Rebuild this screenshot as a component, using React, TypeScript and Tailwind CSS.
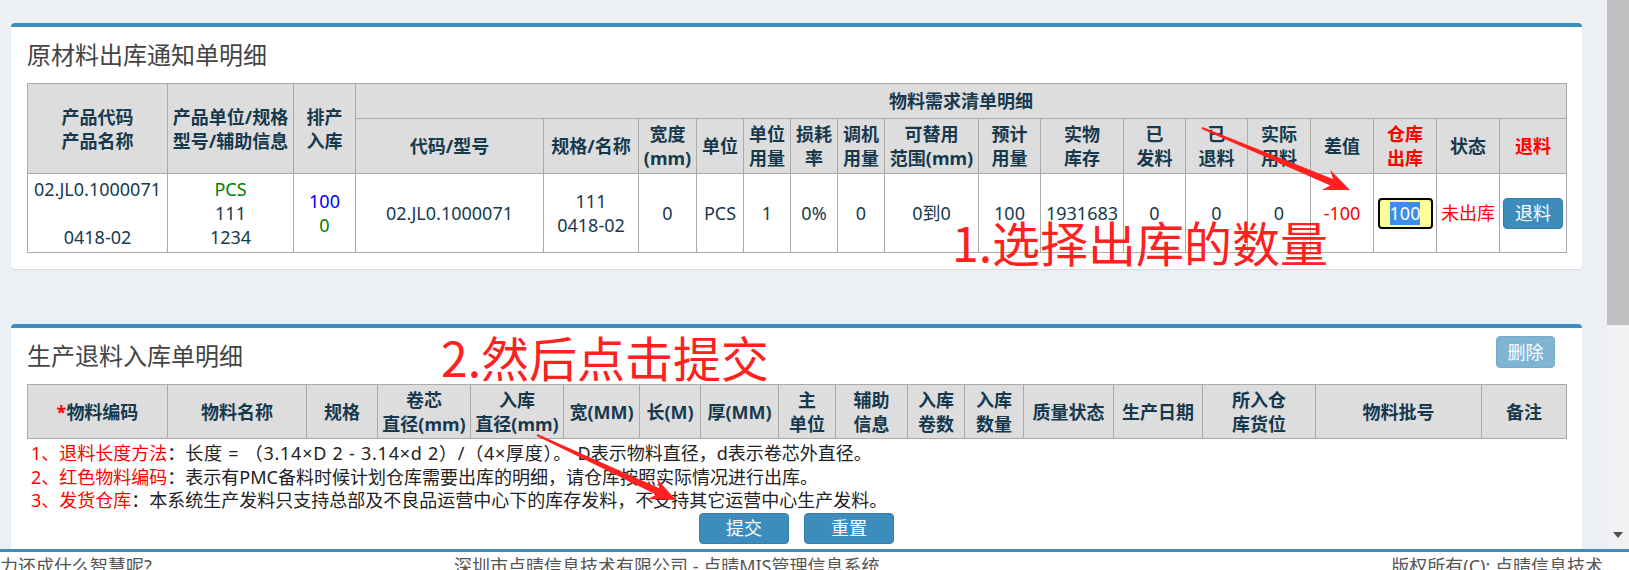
import type { ReactNode } from "react";

// column widths of the two detail tables (px, sum = 1539)
const issueCols = [
  "w-[140px]", "w-[126px]", "w-[62px]", "w-[188px]", "w-[95px]", "w-[58px]", "w-[47px]",
  "w-[47px]", "w-[47px]", "w-[47px]", "w-[94px]", "w-[62px]", "w-[83px]", "w-[62px]",
  "w-[62px]", "w-[63px]", "w-[63px]", "w-[63px]", "w-[63px]", "w-[67px]",
];

const returnCols = [
  "w-[140px]", "w-[139px]", "w-[71px]", "w-[93px]", "w-[93px]", "w-[76px]", "w-[61px]",
  "w-[78px]", "w-[57px]", "w-[72px]", "w-[57px]", "w-[59px]", "w-[90px]", "w-[89px]",
  "w-[113px]", "w-[166px]", "w-[85px]",
];

type Head = { lines: string[]; red?: boolean };

const bomHeads: Head[] = [
  { lines: ["代码/型号"] },
  { lines: ["规格/名称"] },
  { lines: ["宽度", "(mm)"] },
  { lines: ["单位"] },
  { lines: ["单位", "用量"] },
  { lines: ["损耗", "率"] },
  { lines: ["调机", "用量"] },
  { lines: ["可替用", "范围(mm)"] },
  { lines: ["预计", "用量"] },
  { lines: ["实物", "库存"] },
  { lines: ["已", "发料"] },
  { lines: ["已", "退料"] },
  { lines: ["实际", "用料"] },
  { lines: ["差值"] },
  { lines: ["仓库", "出库"], red: true },
  { lines: ["状态"] },
  { lines: ["退料"], red: true },
];

const returnHeads: Head[] = [
  { lines: ["物料名称"] },
  { lines: ["规格"] },
  { lines: ["卷芯", "直径(mm)"] },
  { lines: ["入库", "直径(mm)"] },
  { lines: ["宽(MM)"] },
  { lines: ["长(M)"] },
  { lines: ["厚(MM)"] },
  { lines: ["主", "单位"] },
  { lines: ["辅助", "信息"] },
  { lines: ["入库", "卷数"] },
  { lines: ["入库", "数量"] },
  { lines: ["质量状态"] },
  { lines: ["生产日期"] },
  { lines: ["所入仓", "库货位"] },
  { lines: ["物料批号"] },
  { lines: ["备注"] },
];

function Th({ children, className = "", ...rest }: { children: ReactNode; className?: string; rowSpan?: number; colSpan?: number }) {
  return (
    <th {...rest} className={`border border-[#aaa] bg-[#ddd] p-0 text-center font-bold leading-[24px] ${className}`}>
      {children}
    </th>
  );
}

function Td({ children, className = "" }: { children: ReactNode; className?: string }) {
  return <td className={`border border-[#aaa] p-0 text-center leading-[24px] ${className}`}>{children}</td>;
}

function HeadCell({ head }: { head: Head }) {
  return (
    <Th className={head.red ? "text-[#ff0000]" : ""}>
      {head.lines.map((l) => (
        <div key={l}>{l}</div>
      ))}
    </Th>
  );
}

function Box({ children, className = "" }: { children: ReactNode; className?: string }) {
  return (
    <section className={`w-[1571px] rounded-[4px] border-t-[4px] border-[#3c8dbc] bg-white shadow-[0_1px_1px_rgba(0,0,0,0.1)] ${className}`}>
      {children}
    </section>
  );
}

function IssuePanel() {
  return (
    <Box>
      <div className="flex h-[56px] items-center px-[16px]">
        <h3 className="text-[24px] leading-none text-[#444]">原材料出库通知单明细</h3>
      </div>
      <div className="px-[16px] pb-[16px]">
        <table className="w-[1539px] table-fixed border-collapse text-[#17394d]">
          <colgroup>
            {issueCols.map((c, i) => (
              <col key={i} className={c} />
            ))}
          </colgroup>
          <thead>
            <tr className="h-[35px]">
              <Th rowSpan={2}>
                <div>产品代码</div>
                <div>产品名称</div>
              </Th>
              <Th rowSpan={2}>
                <div>产品单位/规格</div>
                <div>型号/辅助信息</div>
              </Th>
              <Th rowSpan={2}>
                <div>排产</div>
                <div>入库</div>
              </Th>
              <Th colSpan={17}>物料需求清单明细</Th>
            </tr>
            <tr className="h-[55px]">
              {bomHeads.map((h, i) => (
                <HeadCell key={i} head={h} />
              ))}
            </tr>
          </thead>
          <tbody>
            <tr className="h-[79px]">
              <Td>
                <div>02.JL0.1000071</div>
                <div className="h-[24px]" />
                <div>0418-02</div>
              </Td>
              <Td>
                <div className="text-[#008000]">PCS</div>
                <div>111</div>
                <div>1234</div>
              </Td>
              <Td>
                <div className="text-[#0000ff]">100</div>
                <div className="text-[#008000]">0</div>
              </Td>
              <Td>02.JL0.1000071</Td>
              <Td>
                <div>111</div>
                <div>0418-02</div>
              </Td>
              <Td>0</Td>
              <Td>PCS</Td>
              <Td>1</Td>
              <Td>0%</Td>
              <Td>0</Td>
              <Td>0到0</Td>
              <Td>100</Td>
              <Td>1931683</Td>
              <Td>0</Td>
              <Td>0</Td>
              <Td>0</Td>
              <Td className="text-[#ff0000]">-100</Td>
              <Td>
                <div className="mx-auto flex h-[31px] w-[55px] items-center justify-center rounded-[4px] border-2 border-black bg-[#ffff99]">
                  <span className="bg-[#3b8ee6] leading-[23px] text-white">100</span>
                </div>
              </Td>
              <Td className="text-[#ff0000]">未出库</Td>
              <Td>
                <button className="mx-auto flex h-[31px] w-[60px] items-center justify-center rounded-[4px] border border-[#367fa9] bg-[#3c8dbc] text-white">
                  退料
                </button>
              </Td>
            </tr>
          </tbody>
        </table>
      </div>
    </Box>
  );
}

function ReturnPanel() {
  return (
    <Box className="mt-[55px]">
      <div className="flex h-[56px] items-center justify-between pl-[16px] pr-[27px]">
        <h3 className="text-[24px] leading-none text-[#444]">生产退料入库单明细</h3>
        <button className="mb-[8px] h-[32px] w-[59px] rounded-[4px] border border-[#367fa9] bg-[#3c8dbc] text-white opacity-65">
          删除
        </button>
      </div>
      <div className="px-[16px] pb-[24px]">
        <table className="w-[1539px] table-fixed border-collapse text-[#17394d]">
          <colgroup>
            {returnCols.map((c, i) => (
              <col key={i} className={c} />
            ))}
          </colgroup>
          <thead>
            <tr className="h-[54px]">
              <Th>
                <span className="text-[#ff0000]">*</span>物料编码
              </Th>
              {returnHeads.map((h, i) => (
                <HeadCell key={i} head={h} />
              ))}
            </tr>
          </thead>
        </table>
        <div className="mt-[3px] pl-[4px] leading-[23.5px] text-[#222]">
          <p>
            <span className="text-[#ff0000]">1、退料长度方法</span>：
            <span className="tracking-[0.75px]">长度 = （3.14×D 2 - 3.14×d 2）/（4×厚度）。 </span>D表示物料直径，d表示卷芯外直径。
          </p>
          <p>
            <span className="text-[#ff0000]">2、红色物料编码</span>：表示有PMC备料时候计划仓库需要出库的明细，请仓库按照实际情况进行出库。
          </p>
          <p>
            <span className="text-[#ff0000]">3、发货仓库</span>：本系统生产发料只支持总部及不良品运营中心下的库存发料，不支持其它运营中心生产发料。
          </p>
        </div>
        <div className="flex justify-center gap-[15px]">
          <button className="h-[31px] w-[90px] rounded-[4px] border border-[#367fa9] bg-[#3c8dbc] text-white">提交</button>
          <button className="h-[31px] w-[90px] rounded-[4px] border border-[#367fa9] bg-[#3c8dbc] text-white">重置</button>
        </div>
      </div>
    </Box>
  );
}

// red hand-drawn hints laid over the form
function Annotations() {
  return (
    <div className="pointer-events-none absolute inset-0">
      <svg className="absolute left-0 top-0" width="1607" height="549" viewBox="0 0 1607 549">
        <polygon
          fill="#ff2020"
          points="1201.6,128.9 1330.3,185.5 1321.8,190.1 1350,190 1330.3,169.9 1333,179.1 1202.4,127.1"
        />
        <polygon
          fill="#ff2020"
          points="536.6,435.9 656.4,494.7 647.8,499 676,500 657.1,479 659.4,488.3 537.4,434.1"
        />
      </svg>
      <div className="absolute left-[952px] top-[217px] whitespace-nowrap font-['Noto_Sans_CJK_SC',sans-serif] text-[48px] leading-none text-[#ff2020]">
        1.选择出库的数量
      </div>
      <div className="absolute left-[441px] top-[332px] whitespace-nowrap font-['Noto_Sans_CJK_SC',sans-serif] text-[48px] leading-none text-[#ff2020]">
        2.然后点击提交
      </div>
    </div>
  );
}

function Scrollbar() {
  return (
    <div className="flex w-[22px] flex-col bg-[#f1f1f1]">
      <div className="h-[325px] bg-[#c1c1c1]" />
      <div className="flex flex-1 flex-col items-center justify-end pb-[11px]">
        <div className="h-0 w-0 border-x-[5px] border-t-[6px] border-x-transparent border-t-[#505050]" />
      </div>
    </div>
  );
}

function Footer() {
  return (
    <footer className="flex flex-1 whitespace-nowrap border-t-[3px] border-[#3c8dbc] bg-white pt-[2px] leading-[24px] text-[#555]">
      <span className="w-[454px] shrink-0 overflow-hidden">力还成什么智慧呢?</span>
      <span>深圳市点晴信息技术有限公司 - 点晴MIS管理信息系统</span>
      <span className="ml-auto pr-[26px]">版权所有(C): 点晴信息技术</span>
    </footer>
  );
}

export default function App() {
  return (
    <div className="flex h-[570px] w-[1629px] flex-col overflow-hidden font-['Noto_Sans','Noto_Sans_CJK_SC',sans-serif] text-[18px]">
      <div className="flex h-[549px] shrink-0">
        <main className="relative flex-1 overflow-hidden bg-[#ecf0f5] pl-[11px] pt-[23px]">
          <IssuePanel />
          <ReturnPanel />
          <Annotations />
        </main>
        <Scrollbar />
      </div>
      <Footer />
    </div>
  );
}
